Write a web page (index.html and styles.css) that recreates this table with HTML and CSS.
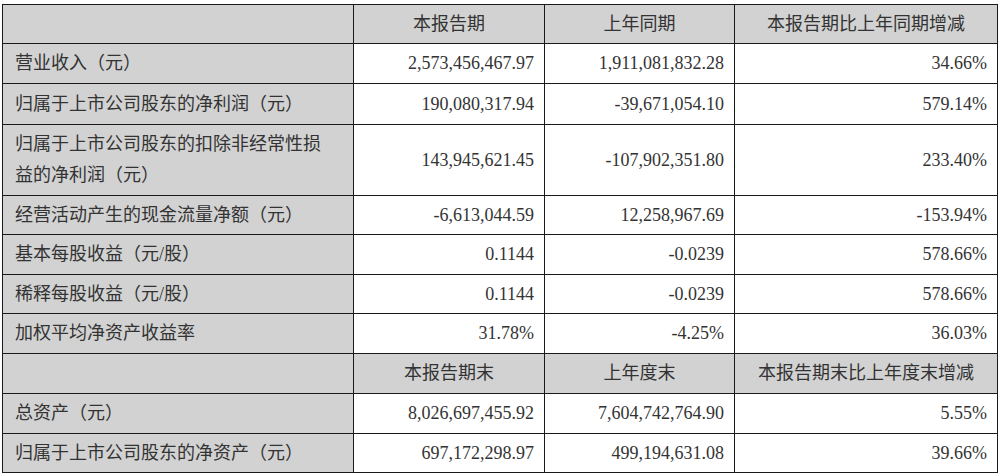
FILE: index.html
```html
<!DOCTYPE html>
<html lang="zh-CN">
<head>
<meta charset="utf-8">
<link rel="stylesheet" href="styles.css">
</head>
<body>
<table class="fin">
  <colgroup>
    <col class="c1"><col class="c2"><col class="c3"><col class="c4">
  </colgroup>
  <tr class="head r39"><td class="label"></td><td class="h">本报告期</td><td class="h">上年同期</td><td class="h">本报告期比上年同期增减</td></tr>
  <tr class="r40"><td class="label">营业收入（元）</td><td class="num">2,573,456,467.97</td><td class="num">1,911,081,832.28</td><td class="num">34.66%</td></tr>
  <tr class="r41"><td class="label">归属于上市公司股东的净利润（元）</td><td class="num">190,080,317.94</td><td class="num">-39,671,054.10</td><td class="num">579.14%</td></tr>
  <tr class="r71"><td class="label">归属于上市公司股东的扣除非经常性损益的净利润（元）</td><td class="num">143,945,621.45</td><td class="num">-107,902,351.80</td><td class="num">233.40%</td></tr>
  <tr class="r39"><td class="label">经营活动产生的现金流量净额（元）</td><td class="num">-6,613,044.59</td><td class="num">12,258,967.69</td><td class="num">-153.94%</td></tr>
  <tr class="r40"><td class="label">基本每股收益（元/股）</td><td class="num">0.1144</td><td class="num">-0.0239</td><td class="num">578.66%</td></tr>
  <tr class="r39"><td class="label">稀释每股收益（元/股）</td><td class="num">0.1144</td><td class="num">-0.0239</td><td class="num">578.66%</td></tr>
  <tr class="r40"><td class="label">加权平均净资产收益率</td><td class="num">31.78%</td><td class="num">-4.25%</td><td class="num">36.03%</td></tr>
  <tr class="head r40"><td class="label"></td><td class="h">本报告期末</td><td class="h">上年度末</td><td class="h">本报告期末比上年度末增减</td></tr>
  <tr class="r40"><td class="label">总资产（元）</td><td class="num">8,026,697,455.92</td><td class="num">7,604,742,764.90</td><td class="num">5.55%</td></tr>
  <tr class="r39"><td class="label">归属于上市公司股东的净资产（元）</td><td class="num">697,172,298.97</td><td class="num">499,194,631.08</td><td class="num">39.66%</td></tr>
</table>
</body>
</html>
```

FILE: styles.css
```css
html, body {
  margin: 0;
  background: #ffffff;
}
body {
  padding: 4px 0 0 2px;
  font-family: "Liberation Serif", "Noto Sans CJK SC", serif;
  font-size: 18px;
  color: #333333;
}
.fin {
  border-collapse: collapse;
  table-layout: fixed;
  width: 995px;
}
.c1 { width: 351px; }
.c2 { width: 191px; }
.c3 { width: 190px; }
.c4 { width: 263px; }
.fin td {
  border: 1.5px solid #1a1a1a;
  padding: 0 10px 0 12px;
  vertical-align: middle;
  line-height: 31px;
  white-space: normal;
}
.fin td.num {
  text-align: right;
  white-space: nowrap;
}
.fin td.label {
  background: #d2d2d2;
  padding-left: 12px;
  padding-right: 22px;
}
.head td {
  background: #d2d2d2;
}
.head td.h {
  text-align: center;
  padding: 0 4px;
  white-space: nowrap;
}
.r39 { height: 39px; }
.r40 { height: 40px; }
.r41 { height: 41px; }
.r71 { height: 71px; }
```
